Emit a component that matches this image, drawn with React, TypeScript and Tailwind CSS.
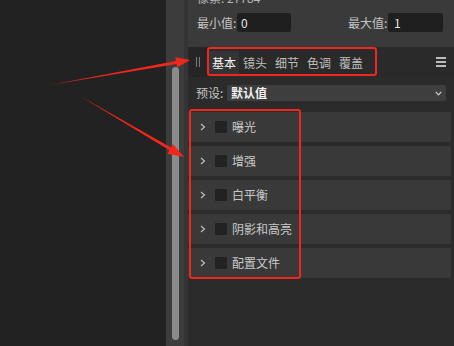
import React from "react";

const tabs = ["基本", "镜头", "细节", "色调", "覆盖"];
const sections = ["曝光", "增强", "白平衡", "阴影和高亮", "配置文件"];

function Chevron() {
  return (
    <svg width="6" height="8" viewBox="0 0 6 8" className="shrink-0">
      <polyline points="1,1 4.5,4 1,7" fill="none" stroke="#bdbdbd" strokeWidth="1.2" />
    </svg>
  );
}

function SectionRow({ label }: { label: string }) {
  return (
    <div className="flex h-[30px] items-center rounded-[2px] bg-[#393939] pl-[12px]">
      <Chevron />
      <div className="ml-[9px] h-[12px] w-[12px] rounded-[1px] bg-[#222222]" />
      <span className="ml-[5px] text-[12px] leading-none text-[#c9c9c9]">{label}</span>
    </div>
  );
}

function Arrows() {
  return (
    <svg className="pointer-events-none absolute left-0 top-0" width="454" height="346">
      <polygon
        points="50,85 175.9,61 175.3,57.3 190,60 177.1,67.6 176.5,63.9"
        fill="#f3261c"
      />
      <polygon
        points="80,96 170.96,147.6 172.98,144 184,157 167.4,153.8 169.44,150.2"
        fill="#f3261c"
      />
    </svg>
  );
}

export default function App() {
  return (
    <div className="relative flex h-[346px] w-[454px] overflow-hidden bg-[#222222] font-['Noto_Sans_CJK_SC','Noto_Sans',sans-serif]">
      <div className="w-[166px] shrink-0" />

      {/* scroll strip */}
      <div className="flex w-[22px] shrink-0">
        <div className="w-[18px] bg-[#3c3c3c] pl-[6px]">
          <div className="mt-[67px] h-[273px] w-[7px] rounded-full bg-[#8b8b8b]" />
        </div>
        <div className="w-[4px] bg-[#343434]" />
      </div>

      {/* panel */}
      <div className="flex flex-1 flex-col bg-[#2b2b2b]">
        <div className="flex h-[47px] flex-col bg-[#3a3a3a]">
          <div className="-mt-[10px] h-[16px] whitespace-nowrap pl-[9px] text-[12px] leading-[16px] text-[#b5b5b5]">像素: 27784</div>
          <div className="mt-[7px] flex h-[19px] items-center pl-[9px] pr-[11px] text-[12px] text-[#c4c4c4]">
            <span className="w-[40px] whitespace-nowrap">最小值:</span>
            <div className="flex h-[19px] w-[54px] items-center rounded-[2px] bg-[#1f1f1f] pl-[4px] text-[#e6e6e6]">0</div>
            <span className="ml-auto w-[40px] whitespace-nowrap">最大值:</span>
            <div className="flex h-[19px] w-[55px] items-center rounded-[2px] bg-[#1f1f1f] pl-[6px] text-[#e6e6e6]">1</div>
          </div>
        </div>

        <div className="flex h-[30px] items-stretch bg-[#2a2a2a]">
          <div className="ml-[1px] flex w-[18px] items-center justify-center gap-[2px] bg-[#252525]">
            <div className="h-[10px] w-px bg-[#7a7a7a]" />
            <div className="h-[10px] w-px bg-[#7a7a7a]" />
          </div>
          <div className="ml-[2px] flex">
            {tabs.map((t, i) => (
              <div
                key={t}
                className={
                  i === 0
                    ? "mt-[4px] flex h-[24px] w-[30px] items-center justify-center bg-[#343434] text-[12px] text-[#f2f2f2]"
                    : "mt-[4px] flex h-[24px] w-[32px] items-center justify-center text-[12px] text-[#bdbdbd]"
                }
              >
                {t}
              </div>
            ))}
          </div>
          <div className="ml-auto mr-[8px] flex flex-col justify-center gap-[2px]">
            <div className="h-[2px] w-[10px] bg-[#bdbdbd]" />
            <div className="h-[2px] w-[10px] bg-[#bdbdbd]" />
            <div className="h-[2px] w-[10px] bg-[#bdbdbd]" />
          </div>
        </div>

        <div className="mt-[8px] flex h-[16px] items-center pl-[8px] pr-[8px] text-[12px]">
          <span className="w-[31px] whitespace-nowrap text-[#c4c4c4]">预设:</span>
          <div className="flex h-[16px] flex-1 items-center rounded-[2px] bg-[#3e3e3e] pl-[4px] pr-[4px]">
            <span className="font-bold text-[#f2f2f2]">默认值</span>
            <svg width="7" height="5" viewBox="0 0 7 5" className="ml-auto">
              <polyline points="0.8,0.8 3.5,3.8 6.2,0.8" fill="none" stroke="#d0d0d0" strokeWidth="1.2" />
            </svg>
          </div>
        </div>

        <div className="mr-[3px] mt-[11px] flex flex-col gap-[4px]">
          {sections.map((s) => (
            <SectionRow key={s} label={s} />
          ))}
        </div>
      </div>

      {/* annotations */}
      <div className="pointer-events-none absolute left-[207px] top-[47px] h-[29px] w-[170px] rounded-[3px] border-2 border-[#f3261c]" />
      <div className="pointer-events-none absolute left-[189px] top-[109px] h-[170px] w-[112px] rounded-[3px] border-2 border-[#f3261c]" />
      <Arrows />
    </div>
  );
}
